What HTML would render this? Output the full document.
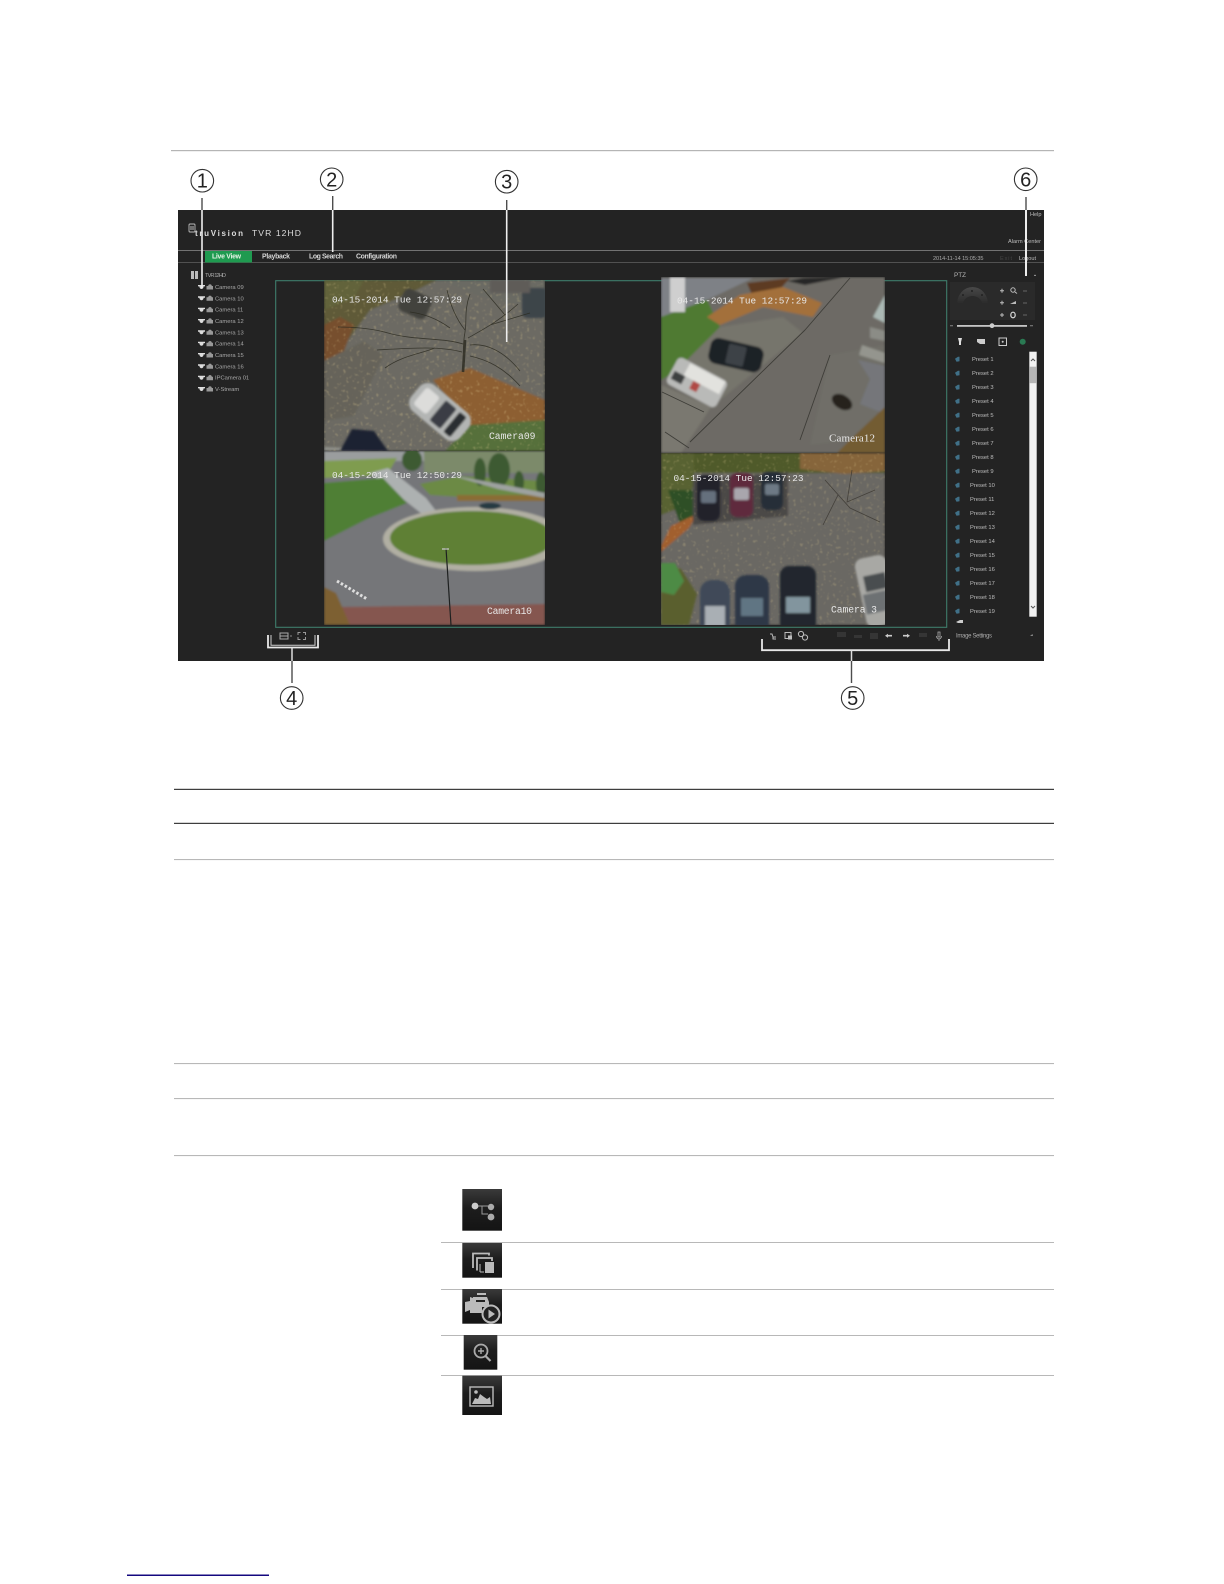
<!DOCTYPE html>
<html lang="en">
<head>
<meta charset="utf-8">
<title>TVR 12HD Live View</title>
<style>
html,body{margin:0;padding:0;background:#fff;width:1224px;height:1584px;overflow:hidden}
svg{display:block}
text{font-family:"Liberation Sans",sans-serif}
.osd{font-family:"Liberation Mono",monospace;font-size:9.4px;fill:#e8e8e8}
.cam{font-family:"Liberation Mono",monospace;font-size:9.7px;fill:#e8e8e8}
.side{font-size:5.8px;fill:#a8a8a8}
.pre{font-size:5.8px;fill:#bdbdbd}
.nav{font-size:6.9px;fill:#d5d5d5;font-weight:bold}
.num{font-size:20px;fill:#222;text-anchor:middle}
.lead{stroke:#4d4d4d;stroke-width:1.4;fill:none}
.leadw{stroke:#e8e8e8;stroke-width:1.8;fill:none}
</style>
</head>
<body>
<svg width="1224" height="1584" viewBox="0 0 1224 1584" xmlns="http://www.w3.org/2000/svg">
<defs>
<filter id="b" x="-5%" y="-5%" width="110%" height="110%"><feGaussianBlur stdDeviation="1"/></filter>
<filter id="s" x="-5%" y="-20%" width="110%" height="140%"><feGaussianBlur stdDeviation="0.35"/></filter>
<filter id="leaf" x="0" y="0" width="100%" height="100%"><feTurbulence type="fractalNoise" baseFrequency="0.3" numOctaves="2" seed="4"/><feColorMatrix values="0 0 0 0 .72  0 0 0 0 .58  0 0 0 0 .28  7 0 0 0 -4.3"/><feGaussianBlur stdDeviation="0.5"/></filter>
<clipPath id="c9"><rect x="324" y="280" width="221" height="171"/></clipPath>
<clipPath id="c10"><rect x="324" y="451" width="221" height="174"/></clipPath>
<clipPath id="c12"><rect x="661" y="277" width="224" height="176"/></clipPath>
<clipPath id="c3"><rect x="661" y="453" width="224" height="172"/></clipPath>
<linearGradient id="ig" x1="0" y1="0" x2="0" y2="1"><stop offset="0" stop-color="#3a3a3a"/><stop offset=".45" stop-color="#1d1d1d"/><stop offset="1" stop-color="#141414"/></linearGradient>
<linearGradient id="dm" x1="0" y1="0" x2="0" y2="1"><stop offset="0" stop-color="#484848"/><stop offset="1" stop-color="#2a2a2a"/></linearGradient>
</defs>
<rect width="1224" height="1584" fill="#fff"/>
<rect x="171" y="150" width="883" height="1.2" fill="#b5b5b5"/>
<rect x="178" y="210" width="866" height="451" fill="#232323"/>
<!-- header -->
<g filter="url(#s)">
<g fill="none" stroke="#bbb" stroke-width="0.9"><rect x="189" y="224" width="6" height="8" rx="1"/><path d="M190 227h4M190 229h4"/></g>
<text x="195" y="236" font-size="8" fill="#ddd" font-weight="bold" textLength="48">truVision</text>
<text x="252" y="236" font-size="8.6" fill="#ddd" textLength="49">TVR 12HD</text>
<text x="1030" y="216" font-size="5.6" fill="#bbb">Help</text>
<text x="1008" y="243" font-size="5.6" fill="#bbb" textLength="33">Alarm Center</text>
<text x="262" y="258.6" class="nav" textLength="28">Playback</text>
<text x="309" y="258.6" class="nav" textLength="34">Log Search</text>
<text x="356" y="258.6" class="nav" textLength="41">Configuration</text>
<text x="933" y="259.8" font-size="5.6" fill="#aaa" textLength="50.5">2014-11-14 15:05:35</text>
<text x="1000" y="259.8" font-size="5.6" fill="#444" textLength="12">Exit</text>
<text x="1019" y="259.8" font-size="5.6" fill="#bbb" textLength="17">Logout</text>
</g>
<rect x="178" y="250" width="866" height="0.9" fill="#7c7c7c"/>
<rect x="178" y="262" width="866" height="0.8" fill="#5d5d5d"/>
<rect x="205" y="251" width="47" height="11.5" fill="#1f9a50"/>
<text x="212" y="258.6" class="nav" style="fill:#e6f3e6" textLength="29" filter="url(#s)">Live View</text>
<!-- tree -->
<g filter="url(#s)">
<g fill="#bbb"><rect x="191" y="271" width="3" height="8"/><rect x="195" y="271" width="3" height="8"/></g>
<text x="205" y="277.2" class="side" textLength="21">TVR 12HD</text>
<g><path transform="translate(0,287)" d="M198-2h7v1.400h-1.400a2.100 2.600 0 0 1-4.200 0H198z" fill="#ddd"/><path transform="translate(0,287)" d="M206.500-1h6.500v3.500h-6.500zM208-1l1-1.600h2l1 1.600z" fill="#999"/><text x="215" y="289" class="side">Camera 09</text></g>
<g transform="translate(0,11.3)"><path transform="translate(0,287)" d="M198-2h7v1.400h-1.400a2.100 2.600 0 0 1-4.200 0H198z" fill="#ddd"/><path transform="translate(0,287)" d="M206.500-1h6.500v3.500h-6.500zM208-1l1-1.600h2l1 1.600z" fill="#999"/><text x="215" y="289" class="side">Camera 10</text></g>
<g transform="translate(0,22.7)"><path transform="translate(0,287)" d="M198-2h7v1.400h-1.400a2.100 2.600 0 0 1-4.200 0H198z" fill="#ddd"/><path transform="translate(0,287)" d="M206.500-1h6.500v3.500h-6.500zM208-1l1-1.600h2l1 1.600z" fill="#999"/><text x="215" y="289" class="side">Camera 11</text></g>
<g transform="translate(0,34)"><path transform="translate(0,287)" d="M198-2h7v1.400h-1.400a2.100 2.600 0 0 1-4.200 0H198z" fill="#ddd"/><path transform="translate(0,287)" d="M206.500-1h6.500v3.500h-6.500zM208-1l1-1.600h2l1 1.600z" fill="#999"/><text x="215" y="289" class="side">Camera 12</text></g>
<g transform="translate(0,45.3)"><path transform="translate(0,287)" d="M198-2h7v1.400h-1.400a2.100 2.600 0 0 1-4.200 0H198z" fill="#ddd"/><path transform="translate(0,287)" d="M206.500-1h6.500v3.500h-6.500zM208-1l1-1.600h2l1 1.600z" fill="#999"/><text x="215" y="289" class="side">Camera 13</text></g>
<g transform="translate(0,56.7)"><path transform="translate(0,287)" d="M198-2h7v1.400h-1.400a2.100 2.600 0 0 1-4.200 0H198z" fill="#ddd"/><path transform="translate(0,287)" d="M206.500-1h6.500v3.500h-6.500zM208-1l1-1.600h2l1 1.600z" fill="#999"/><text x="215" y="289" class="side">Camera 14</text></g>
<g transform="translate(0,68)"><path transform="translate(0,287)" d="M198-2h7v1.400h-1.400a2.100 2.600 0 0 1-4.200 0H198z" fill="#ddd"/><path transform="translate(0,287)" d="M206.500-1h6.500v3.500h-6.500zM208-1l1-1.600h2l1 1.600z" fill="#999"/><text x="215" y="289" class="side">Camera 15</text></g>
<g transform="translate(0,79.3)"><path transform="translate(0,287)" d="M198-2h7v1.400h-1.400a2.100 2.600 0 0 1-4.200 0H198z" fill="#ddd"/><path transform="translate(0,287)" d="M206.500-1h6.500v3.500h-6.500zM208-1l1-1.600h2l1 1.600z" fill="#999"/><text x="215" y="289" class="side">Camera 16</text></g>
<g transform="translate(0,90.7)"><path transform="translate(0,287)" d="M198-2h7v1.400h-1.400a2.100 2.600 0 0 1-4.200 0H198z" fill="#ddd"/><path transform="translate(0,287)" d="M206.500-1h6.500v3.500h-6.500zM208-1l1-1.600h2l1 1.600z" fill="#999"/><text x="215" y="289" class="side">IPCamera 01</text></g>
<g transform="translate(0,102)"><path transform="translate(0,287)" d="M198-2h7v1.400h-1.400a2.100 2.600 0 0 1-4.200 0H198z" fill="#ddd"/><path transform="translate(0,287)" d="M206.500-1h6.500v3.500h-6.500zM208-1l1-1.600h2l1 1.600z" fill="#999"/><text x="215" y="289" class="side">V-Stream</text></g>
</g>
<!-- green frame -->
<rect x="275.700" y="280.700" width="671" height="346.600" fill="none" stroke="#3f7d6c" stroke-width="1.100"/>

<!-- Camera 09 -->
<g clip-path="url(#c9)">
<g filter="url(#b)">
<rect x="324" y="280" width="221" height="171" fill="#6c6b63"/>
<path d="M324 280h113l-27 13-40 17-27 37-19 13z" fill="#5f5a37"/>
<path d="M324 280h40l-10 18-30 12z" fill="#62643a"/>
<path d="M324 325l16-8 14 8-10 26-20 10z" fill="#77502f"/>
<path d="M324 361l40-20 20 15-30 60-30 5z" fill="#66645a"/>
<path d="M440 280h105v26l-40-4-30-8z" fill="#6a6a64"/>
<path d="M433 380l37-12 40 17 35 15v30l-45 10-30-15z" fill="#8d5f30"/>
<path d="M470 425l75-5v31H445z" fill="#56703a"/>
<path d="M324 447l20 1 30 3h-50z" fill="#8f908a"/>
</g>
<rect x="324" y="280" width="221" height="171" filter="url(#leaf)" opacity=".3"/>
<g filter="url(#b)">
<rect x="400" y="292" width="30" height="24" rx="6" fill="#43423d" transform="rotate(25 415 304)"/>
<rect x="522" y="288" width="26" height="30" rx="5" fill="#3d444a"/>
<rect x="490" y="280" width="40" height="13" fill="#5e5c58"/>
<path d="M340 451l12-22 22 2 14 20z" fill="#1e2431"/>
<g transform="rotate(40 440 412)">
<rect x="408" y="395" width="64" height="34" rx="11" fill="#b3b5b4"/>
<rect x="437" y="399" width="14" height="26" rx="2" fill="#3a3e44"/>
<rect x="455" y="399" width="9" height="26" rx="2" fill="#2b2f33"/>
<rect x="414" y="401" width="17" height="22" rx="3" fill="#dcdcda"/>
</g>
</g>
<g fill="none" stroke="#2b2a20" stroke-width=".8" opacity=".8">
<path d="M463 372c1-14-1-24 2-40 2-12-1-22 5-38M465 330c-8-10-14-22-18-40M466 345c-22-8-50-4-78-12-14-4-30-6-50-6M462 352c-22-6-50-4-85-2M468 338c14-8 30-16 50-34M470 345c16-2 34 6 50 26M470 356c18 4 34 12 50 30M450 328c-14-10-26-14-40-16M505 315l-22-26M490 325l40-12M435 348c-15 6-34 8-50 20"/>
<path d="M463 372l2-32" stroke-width="2.600"/>
</g>
<text x="332" y="302.300" class="osd" textLength="130">04-15-2014 Tue 12:57:29</text>
<text x="489" y="439" class="cam" textLength="46.500">Camera09</text>
</g>

<!-- Camera 10 -->
<g clip-path="url(#c10)">
<g filter="url(#b)">
<rect x="324" y="451" width="221" height="174" fill="#747679"/>
<rect x="324" y="451" width="100" height="10" fill="#9a9d9e"/>
<rect x="424" y="451" width="121" height="22" fill="#7b8a6a"/>
<path d="M324 461l73-3-10 17-63 3z" fill="#7f9c50"/>
<path d="M370 473l18-5 38 30 10 13-14 3z" fill="#adb1b1"/>
<path d="M420 484l40-8 85 5v14l-85 2-30-2z" fill="#6c8a45"/>
<path d="M324 483l59-5 24 25-40 16-43 22z" fill="#4f7f36"/>
<path d="M457 495h88v6h-88z" fill="#8a6d34"/>
<ellipse cx="475" cy="539" rx="92" ry="32" fill="#b1afa3"/>
<ellipse cx="472" cy="538" rx="82" ry="27" fill="#5e8036"/>
<ellipse cx="490" cy="506" rx="11" ry="3.500" fill="#263a43"/>
<g fill="#3c5a32"><ellipse cx="412" cy="460" rx="10" ry="11"/><ellipse cx="480" cy="472" rx="6" ry="14"/><ellipse cx="499" cy="470" rx="11" ry="17"/><ellipse cx="519" cy="482" rx="5" ry="11"/><ellipse cx="541" cy="484" rx="5" ry="12"/></g>
<path d="M450 475l48 14 47 9v-5l-40-8z" fill="#9ea2a0"/>
<path d="M338 607l207-3v21H344z" fill="#85564f"/>
<path d="M324 587l12 6 14 32h-26z" fill="#7d6031"/>
</g>
<path d="M446 548l5 77" stroke="#1e2020" stroke-width="1.200"/><path d="M442 549h7" stroke="#ccc" stroke-width="1.200"/>
<path d="M337 581l30 18" stroke="#ddd" stroke-width="3" stroke-dasharray="2.500 2"/>
<text x="332" y="478" class="osd" textLength="130">04-15-2014 Tue 12:50:29</text>
<text x="487" y="614" class="cam" textLength="45">Camera10</text>
</g>

<!-- Camera 12 -->
<g clip-path="url(#c12)">
<g filter="url(#b)">
<rect x="661" y="277" width="224" height="176" fill="#6d6b65"/>
<path d="M661 278h92l-46 22-46 17z" fill="#7e8186"/>
<path d="M661 317l46-17 13 27-37 40-22 13z" fill="#4f7a33"/>
<path d="M747 283l43-5-8 9-30 8z" fill="#5d3b20"/>
<path d="M707 317l33-22 43-8 39 16-9 14-50-10-43 18z" fill="#a3703a"/>
<path d="M720 327l63-10 20 16-83 67-50-23z" fill="#76746c"/>
<path d="M661 385l50 22-30 46h-20z" fill="#7a7870"/>
<path d="M830 355l55-10v60l-35 35-40 5z" fill="#6f6e68"/>
<path d="M885 295l-12 22 12 6z" fill="#aab8b4"/>
<path d="M870 327l15 4v10l-15-3z" fill="#8b8c86"/>
<path d="M862 345l23 8v10l-26-8z" fill="#94958e"/>
<path d="M858 360l27 6v48l-25-10 10-25z" fill="#75767a"/>
<path d="M850 440l35-33v46h-48z" fill="#735c31"/>
<rect x="670" y="277" width="15" height="35" fill="#cfcfcf"/>
<g transform="rotate(13 735 355)"><rect x="709" y="342" width="54" height="26" rx="8" fill="#1f2327"/><rect x="727" y="345" width="18" height="20" rx="2" fill="#3c4247"/></g>
<path d="M805 285l30-6 8-2-40 1-16 3z" fill="#262626"/>
<g transform="rotate(28 696 382)">
<rect x="669" y="367" width="56" height="30" rx="5" fill="#b9bab8"/>
<rect x="682" y="368" width="40" height="14" fill="#e2e2de"/>
<rect x="672" y="382" width="12" height="9" fill="#3d3f41"/>
<rect x="693" y="382" width="8" height="9" fill="#b04a44"/>
</g>
<ellipse cx="842" cy="402" rx="11" ry="7" fill="#26231e" transform="rotate(30 842 402)"/>
</g>
<g stroke="#3e3d38" stroke-width=".9" fill="none"><path d="M662 392l42 20M690 442l115-112M805 330l45-52M665 432l24 16M830 355l-30 85"/></g>
<text x="677" y="303.500" class="osd" textLength="130">04-15-2014 Tue 12:57:29</text>
<text x="829" y="441.500" class="cam" style="font-family:'Liberation Serif',serif;font-size:11px" textLength="46">Camera12</text>
</g>

<!-- Camera 03 -->
<g clip-path="url(#c3)">
<g filter="url(#b)">
<rect x="661" y="453" width="224" height="172" fill="#6a6863"/>
<rect x="661" y="453" width="224" height="20" fill="#4f5a2a"/>
<path d="M800 453h85v18l-40 3-45-5z" fill="#86653a"/>
<path d="M661 453h33v32l-12 22-21 8z" fill="#586232"/>
<path d="M668 490h26v30l-14 4z" fill="#2f5027"/>
<path d="M661 546l10-20 26-12-8 14-28 24z" fill="#a15f2f"/>
<path d="M693 480l95-8v44l-95 9z" fill="#4b4a46"/>
</g>
<rect x="661" y="453" width="224" height="172" filter="url(#leaf)" opacity=".25"/>
<g filter="url(#b)">
<rect x="697" y="475" width="23" height="46" rx="7" fill="#20232b"/><rect x="701" y="491" width="15" height="12" rx="2" fill="#65707d"/>
<rect x="730" y="473" width="23" height="44" rx="7" fill="#5f2a3d"/><rect x="734" y="488" width="15" height="12" rx="2" fill="#a9a6ad"/>
<rect x="761" y="472" width="22" height="38" rx="7" fill="#282d37"/><rect x="765" y="484" width="14" height="11" rx="2" fill="#6d7985"/>
<path d="M661 563l20 6 16 25-8 31h-28z" fill="#5a5e2e"/>
<path d="M661 563h14l9 18-10 14-13-3z" fill="#4e8b44"/>
<rect x="700" y="580" width="30" height="60" rx="12" fill="#3f4a59"/><rect x="705" y="606" width="20" height="20" fill="#a9afb4"/>
<rect x="735" y="575" width="34" height="62" rx="11" fill="#2d3947"/><rect x="741" y="598" width="22" height="18" fill="#607583"/>
<rect x="780" y="566" width="36" height="70" rx="9" fill="#20262f"/><rect x="786" y="597" width="24" height="16" fill="#82959e"/>
<g transform="rotate(-12 872 590)"><rect x="860" y="557" width="32" height="70" rx="8" fill="#a8a8a4"/><rect x="866" y="575" width="22" height="16" fill="#4a4e50"/><rect x="862" y="593" width="26" height="20" fill="#6d7173"/></g>
</g>
<g stroke="#3a3630" stroke-width=".8" fill="none" opacity=".8"><path d="M825 480l25 28 30 14M852 470l-5 32 28-12M838 495l-15 30"/></g>
<text x="673.500" y="481" class="osd" textLength="130">04-15-2014 Tue 12:57:23</text>
<text x="831" y="612.600" class="cam" textLength="46">Camera 3</text>
</g>

<!-- PTZ panel -->
<g filter="url(#s)">
<text x="954" y="277" font-size="6.400" fill="#b5b5b5">PTZ</text>
<path d="M1034 276h2l-1-1.600z" fill="#bbb"/>
<rect x="950" y="282" width="85" height="38" fill="#2a2a2a"/>
<path d="M957 304a15.500 17 0 0 1 31 0l-6 0a9.500 8 0 0 0-19 0z" fill="url(#dm)"/>
<circle cx="972" cy="291" r="1" fill="#222"/><circle cx="963" cy="295" r="1" fill="#222"/><circle cx="982" cy="295" r="1" fill="#222"/>
<path d="M1000 290.700h4M1002 288.700v4M1000 302.700h4M1002 300.700v4M1000 315h4M1002 313v4" stroke="#bbb" stroke-width="1"/>
<circle cx="1013" cy="290" r="2.200" fill="none" stroke="#bbb" stroke-width="1"/><path d="M1015 292l2 1.500" stroke="#bbb"/>
<path d="M1010 304l6-3v3z" fill="#bbb"/>
<ellipse cx="1013" cy="315" rx="2.200" ry="2.800" fill="none" stroke="#ddd" stroke-width="1.200"/>
<path d="M1023 291h4M1023 303h4M1023 315h4" stroke="#666" stroke-width="1"/>
<rect x="957" y="325" width="70" height="1.800" fill="#c4c4c4"/>
<circle cx="992" cy="325.700" r="2.400" fill="#ccc"/>
<path d="M950 325.700h3M1030 325.700h3" stroke="#888"/>
<path d="M958 338h4l-1 4v3h-2v-3z" fill="#ddd"/>
<path d="M977 339h8v5h-5l-3-2z" fill="#ccc"/>
<rect x="999" y="338" width="7.500" height="7.500" fill="none" stroke="#ccc" stroke-width="1"/><circle cx="1002.700" cy="341.700" r="1" fill="#ccc"/>
<circle cx="1022.700" cy="341.700" r="3" fill="#2a7a52"/>
<g fill="#3f7088"><path d="M955 358.700l3-2h1.500v4.500l-3 .5z"/><path d="M955 372.700l3-2h1.500v4.500l-3 .5z"/><path d="M955 386.700l3-2h1.500v4.500l-3 .5z"/><path d="M955 400.700l3-2h1.500v4.500l-3 .5z"/><path d="M955 414.700l3-2h1.500v4.500l-3 .5z"/><path d="M955 428.700l3-2h1.500v4.500l-3 .5z"/><path d="M955 442.700l3-2h1.500v4.500l-3 .5z"/><path d="M955 456.700l3-2h1.500v4.500l-3 .5z"/><path d="M955 470.700l3-2h1.500v4.500l-3 .5z"/><path d="M955 484.700l3-2h1.500v4.500l-3 .5z"/><path d="M955 498.700l3-2h1.500v4.500l-3 .5z"/><path d="M955 512.700l3-2h1.500v4.500l-3 .5z"/><path d="M955 526.700l3-2h1.500v4.500l-3 .5z"/><path d="M955 540.700l3-2h1.500v4.500l-3 .5z"/><path d="M955 554.700l3-2h1.500v4.500l-3 .5z"/><path d="M955 568.700l3-2h1.500v4.500l-3 .5z"/><path d="M955 582.700l3-2h1.500v4.500l-3 .5z"/><path d="M955 596.700l3-2h1.500v4.500l-3 .5z"/><path d="M955 610.700l3-2h1.500v4.500l-3 .5z"/></g>
<text class="pre" x="972" y="361">Preset 1</text><text class="pre" x="972" y="375">Preset 2</text><text class="pre" x="972" y="389">Preset 3</text><text class="pre" x="972" y="403">Preset 4</text><text class="pre" x="972" y="417">Preset 5</text><text class="pre" x="972" y="431">Preset 6</text><text class="pre" x="972" y="445">Preset 7</text><text class="pre" x="972" y="459">Preset 8</text><text class="pre" x="972" y="473">Preset 9</text>
<text class="pre" x="970" y="487">Preset 10</text><text class="pre" x="970" y="501">Preset 11</text><text class="pre" x="970" y="515">Preset 12</text><text class="pre" x="970" y="529">Preset 13</text><text class="pre" x="970" y="543">Preset 14</text><text class="pre" x="970" y="557">Preset 15</text><text class="pre" x="970" y="571">Preset 16</text><text class="pre" x="970" y="585">Preset 17</text><text class="pre" x="970" y="599">Preset 18</text><text class="pre" x="970" y="613">Preset 19</text>
<path d="M956 622l4-2h3v3h-5z" fill="#ccc"/>
<text x="956" y="637.500" font-size="6" fill="#aaa" textLength="36">Image Settings</text>
<path d="M1030 636l2.500-2 .5 2z" fill="#888"/>
</g>
<rect x="1029.300" y="351.700" width="7.400" height="265" fill="#f2f2f2"/>
<rect x="1029.800" y="366.700" width="6.400" height="16.500" fill="#b5b5b5"/>
<path d="M1031 361l2-2 2 2M1031 606l2 2 2-2" fill="none" stroke="#555" stroke-width="1"/>
<!-- bottom toolbar -->
<g filter="url(#s)">
<g fill="none" stroke="#aaa" stroke-width="1"><rect x="280" y="633" width="8" height="6"/><path d="M280 636h8"/></g>
<path d="M290 636h2" stroke="#888"/>
<g fill="none" stroke="#9a9a9a" stroke-width="1"><path d="M298 635v-2.500h2.500M305.500 635v-2.500h-2.500M298 637v2.500h2.500M305.500 637v2.500h-2.500"/></g>
<g fill="none" stroke="#bbb" stroke-width="1"><path d="M770 634h2l1 3h3M773 637v2h3"/><rect x="785" y="632.500" width="6" height="6"/><circle cx="801" cy="634" r="2.600"/><circle cx="805" cy="637.500" r="2.600"/></g>
<rect x="788" y="635.500" width="4" height="4" fill="#bbb"/>
<g fill="#363636"><rect x="837" y="632" width="9" height="5"/><rect x="854" y="635" width="8" height="3"/><rect x="870" y="633" width="8" height="6"/><rect x="919" y="633" width="8" height="4"/></g>
<path d="M885 635.700l3-2v1.200h4v1.600h-4v1.200zM910 635.700l-3-2v1.200h-4v1.600h4v1.200z" fill="#ccc"/>
<path d="M938 632h2v5h-2zM936.500 636a2.500 3 0 0 0 5 0M939 639v2" fill="none" stroke="#aaa" stroke-width=".8"/>
</g>
<!-- brackets and leaders -->
<path class="leadw" d="M268 635v12.500h50V635"/>
<path d="M271 635v10.200h44V635" fill="none" stroke="#cfcfcf" stroke-width="1"/>
<path class="lead" d="M292 661v22"/>
<path d="M292 648v13" stroke="#ddd" stroke-width="1.500"/>
<path class="leadw" d="M762 639v11.200h187V639"/>
<path class="lead" d="M851.500 661v22"/>
<path d="M851.500 650.500v10.500" stroke="#ddd" stroke-width="1.500"/>
<path d="M202 198v12" class="lead"/><path d="M202 210v78" stroke="#eee" stroke-width="1.600"/>
<path d="M332.700 196v14" class="lead"/><path d="M332.700 210v42" stroke="#eee" stroke-width="1.600"/>
<path d="M506.700 200v10" class="lead"/><path d="M506.700 210v132" stroke="#eee" stroke-width="1.600"/>
<path d="M1026 197v13" class="lead"/><path d="M1026 210v66" stroke="#eee" stroke-width="2"/>
<!-- callouts -->
<g fill="#fff" stroke="#333" stroke-width="1.100">
<circle cx="202.300" cy="180.700" r="11.300"/><circle cx="331.700" cy="179.300" r="11.300"/><circle cx="506.700" cy="181.700" r="11.300"/><circle cx="1025.700" cy="179.300" r="11.300"/><circle cx="291.700" cy="698" r="11.300"/><circle cx="852.700" cy="698" r="11.300"/>
</g>
<text class="num" x="202.300" y="187.700">1</text><text class="num" x="331.700" y="186.300">2</text><text class="num" x="506.700" y="188.700">3</text><text class="num" x="1025.700" y="186.300">6</text><text class="num" x="291.700" y="705">4</text><text class="num" x="852.700" y="705">5</text>
<!-- table rules -->
<rect x="174" y="788.800" width="880" height="1.100" fill="#2a2a2a"/>
<rect x="174" y="822.800" width="880" height="1.100" fill="#2a2a2a"/>
<g fill="#b8b8b8"><rect x="174" y="859" width="880" height="1.100"/><rect x="174" y="1063" width="880" height="1.100"/><rect x="174" y="1098" width="880" height="1.100"/><rect x="174" y="1155" width="880" height="1.100"/>
<rect x="441" y="1242" width="613" height="1"/><rect x="441" y="1289" width="613" height="1"/><rect x="441" y="1335" width="613" height="1"/><rect x="441" y="1375" width="613" height="1"/></g>
<!-- icons -->
<rect x="462.300" y="1189" width="39.700" height="41.700" fill="url(#ig)"/>
<g filter="url(#s)"><path d="M474 1206h8v8h6M482 1206h6" fill="none" stroke="#999" stroke-width="1"/><circle cx="475" cy="1206" r="3.400" fill="#ccc"/><circle cx="491" cy="1207" r="3.200" fill="#aaa"/><circle cx="491" cy="1217" r="3.400" fill="#aaa"/></g>
<rect x="462.300" y="1243" width="39.700" height="34.700" fill="url(#ig)"/>
<g filter="url(#s)"><path d="M473 1268v-14.500h16v2M477 1270.500v-12.500h15v3" fill="none" stroke="#bbb" stroke-width="1.800"/><path d="M480 1272v-8M480 1272h4" stroke="#bbb" fill="none"/><rect x="485" y="1262" width="9" height="11" fill="#bbb"/></g>
<rect x="462.300" y="1289" width="39.700" height="34.700" fill="url(#ig)"/>
<g filter="url(#s)"><path d="M465 1302l5-1v-4l3 1v-1h14l2 5v5h-7v6h-12v-3l-5 2z" fill="#bbb"/><path d="M477 1294h9" stroke="#bbb" stroke-width="2"/><rect x="476" y="1300" width="9" height="2" fill="#222"/><circle cx="491" cy="1314" r="8.500" fill="#222" stroke="#bbb" stroke-width="2"/><path d="M488.500 1309.500l6.500 4.500-6.500 4.500z" fill="#bbb"/></g>
<rect x="463.700" y="1335" width="33.600" height="34.700" fill="url(#ig)"/>
<g filter="url(#s)" fill="none" stroke="#aaa"><circle cx="481" cy="1351" r="6.500" stroke-width="1.800"/><path d="M485.500 1356l5 5" stroke-width="2.200"/><path d="M481 1348v6M478 1351h6" stroke-width="1.400"/></g>
<rect x="462.300" y="1375.700" width="39.700" height="39.300" fill="url(#ig)"/>
<g filter="url(#s)"><rect x="470" y="1387" width="23" height="19" fill="none" stroke="#bbb" stroke-width="1.400"/><circle cx="476" cy="1392" r="1.800" fill="#bbb"/><path d="M472 1404l3-6 3 1 2-5 4 3 3 2 3-2 1 7z" fill="#bbb"/></g>
<!-- bottom link -->
<rect x="127" y="1574.500" width="142" height="1.500" fill="#14087f"/>
</svg>
</body>
</html>
